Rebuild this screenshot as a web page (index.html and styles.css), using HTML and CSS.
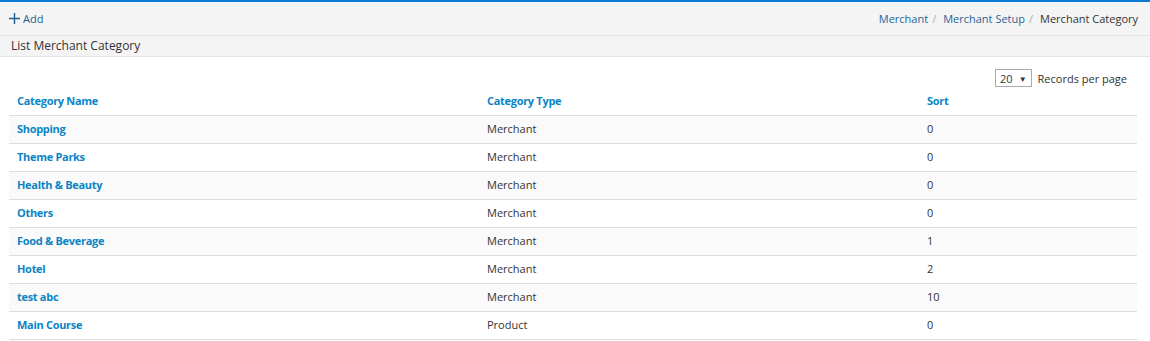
FILE: index.html
```html
<!DOCTYPE html>
<html lang="en">
<head>
  <meta charset="UTF-8" />
  <title>List Merchant Category</title>
  <link rel="stylesheet" href="styles.css">
</head>
<body>
  <div class="toolbar">
    <a class="add" href="#">
      <svg class="plus" width="11" height="11" viewBox="0 0 11 11"><path d="M5.5 0v11M0 5.5h11" stroke="#1f5f8f" stroke-width="1.4"/></svg>Add
    </a>
    <ul class="breadcrumb">
      <li><a href="#">Merchant</a></li>
      <li><a href="#">Merchant Setup</a></li>
      <li class="active">Merchant Category</li>
    </ul>
  </div>

  <div class="panel-title">List Merchant Category</div>

  <div class="panel-body">
    <div class="pager">
      <div class="select">20 <span class="caret">&#9660;</span></div>
      <span>Records per page</span>
    </div>

    <table class="grid">
      <thead>
        <tr>
          <th class="col-name">Category Name</th>
          <th class="col-type">Category Type</th>
          <th>Sort</th>
        </tr>
      </thead>
      <tbody>
        <tr><td><a href="#">Shopping</a></td><td>Merchant</td><td>0</td></tr>
        <tr><td><a href="#">Theme Parks</a></td><td>Merchant</td><td>0</td></tr>
        <tr><td><a href="#">Health &amp; Beauty</a></td><td>Merchant</td><td>0</td></tr>
        <tr><td><a href="#">Others</a></td><td>Merchant</td><td>0</td></tr>
        <tr><td><a href="#">Food &amp; Beverage</a></td><td>Merchant</td><td>1</td></tr>
        <tr><td><a href="#">Hotel</a></td><td>Merchant</td><td>2</td></tr>
        <tr><td><a href="#">test abc</a></td><td>Merchant</td><td>10</td></tr>
        <tr><td><a href="#">Main Course</a></td><td>Product</td><td>0</td></tr>
      </tbody>
    </table>
  </div>
</body>
</html>
```

FILE: styles.css
```css
body {
  margin: 0;
  font-family: "Open Sans", Arial, sans-serif;
  font-size: 11px;
  color: #333;
  background-color: #fff;
  border-top: 2px solid #0a7bd6;
}
a {
  text-decoration: none;
}
.toolbar {
  display: flex;
  justify-content: space-between;
  align-items: center;
  height: 33px;
  padding: 0 12px 0 9px;
  background-color: #f4f4f4;
  border-bottom: 1px solid #e4e4e4;
}
.add {
  display: flex;
  align-items: center;
  color: #1f5f8f;
  font-size: 11px;
}
.plus {
  margin-right: 3px;
}
.breadcrumb {
  display: flex;
  margin: 0;
  padding: 0;
  list-style: none;
}
.breadcrumb li + li::before {
  content: "/";
  padding: 0 7px 0 4px;
  color: #aaa;
}
.breadcrumb a {
  color: #2a6496;
}
.breadcrumb .active {
  color: #333;
}
.panel-title {
  height: 20px;
  line-height: 20px;
  padding-left: 11px;
  font-size: 12px;
  background-color: #f4f4f4;
  border-bottom: 1px solid #e4e4e4;
}
.panel-body {
  padding: 12px 13px 0 9px;
}
.pager {
  display: flex;
  justify-content: flex-end;
  align-items: center;
  gap: 6px;
  padding-right: 10px;
}
.select {
  display: flex;
  align-items: center;
  gap: 6px;
  height: 16px;
  padding: 0 4px;
  border: 1px solid #a9a9a9;
  font-size: 11px;
}
.caret {
  font-size: 8px;
}
.grid {
  width: 100%;
  border-collapse: collapse;
  margin-top: 1px;
}
.grid th {
  text-align: left;
  color: #0a84c6;
  font-weight: bold;
  letter-spacing: -0.3px;
  height: 25px;
  padding: 0 8px 2px;
  border-bottom: 1px solid #ddd;
}
.grid td {
  height: 25px;
  padding: 0 8px 2px;
  border-bottom: 1px solid #ddd;
}
.grid td a {
  color: #0a84c6;
  font-weight: bold;
  letter-spacing: -0.3px;
}
.grid tbody tr:nth-child(odd) {
  background-color: #fafafa;
}
.col-name {
  width: 454px;
}
.col-type {
  width: 424px;
}
```
